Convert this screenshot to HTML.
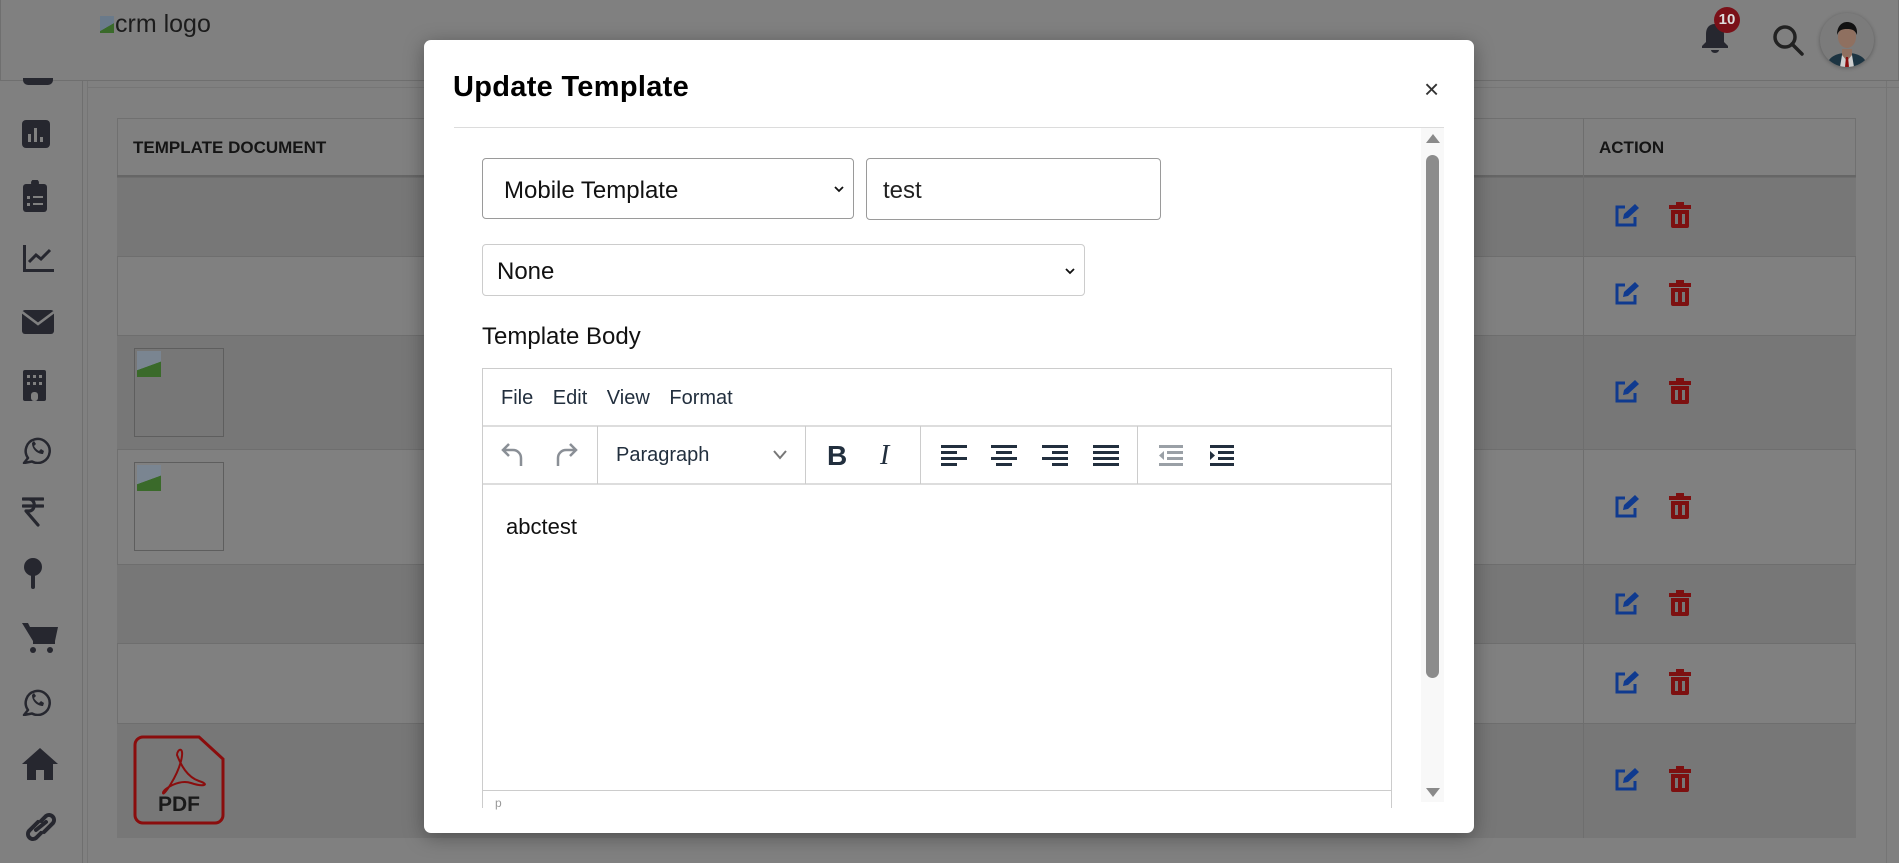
<!DOCTYPE html>
<html><head><meta charset="utf-8"><style>
*{margin:0;padding:0;box-sizing:border-box}
body{width:1899px;height:863px;overflow:hidden;background:#808080;font-family:"Liberation Sans",sans-serif;position:relative}
.a{position:absolute}
.ic{position:absolute}
.row{position:absolute;left:117px;width:1739px;border-top:1px solid #6e6e6e}
.mod{position:absolute;left:424px;top:40px;width:1050px;height:793px;background:#fff;border-radius:7px;box-shadow:0 4px 20px rgba(0,0,0,.35)}
.tb svg{position:absolute}
.sep{position:absolute;top:426px;width:1px;height:58px;background:#ccc}
</style></head><body>
<!-- header -->
<div class="a" style="left:0;top:0;width:1899px;height:81px;border-bottom:1px solid #6f6f6f;border-left:1px solid #6f6f6f;border-right:1px solid #6f6f6f"></div>
<div class="a" style="left:100px;top:10px;font-size:25px;color:#1c1c1c"><span style="display:inline-block;width:14px;height:17px;background:linear-gradient(150deg,#6a7a8a 60%,#3a6a2a 61%);vertical-align:-1px;margin-right:1px"></span>crm logo</div>
<svg class="a" style="left:1700px;top:22px" width="30" height="32" viewBox="0 0 30 32"><path fill="#26272f" d="M15 2c-6 0-9 4-9 10v8l-4 4v2h26v-2l-4-4v-8c0-6-3-10-9-10z"/><path fill="#26272f" d="M11 28h8a4 3 0 0 1-8 0z"/></svg>
<div class="a" style="left:1714px;top:7px;width:26px;height:26px;border-radius:50%;background:#7a1018;color:#ddd;font-size:15px;font-weight:bold;text-align:center;line-height:26px">10</div>
<svg class="a" style="left:1771px;top:23px" width="34" height="34" viewBox="0 0 34 34"><circle cx="14" cy="14" r="10" fill="none" stroke="#222" stroke-width="3.5"/><path d="M21 21l10 10" stroke="#222" stroke-width="3.5" stroke-linecap="round"/></svg>
<div class="a" style="left:1820px;top:13px;width:54px;height:54px;border-radius:50%;background:#7b7b7b;overflow:hidden;box-shadow:0 1px 4px rgba(0,0,0,.3)">
<svg width="54" height="54" viewBox="0 0 54 54"><path d="M6 54c2-10 10-14 21-14s19 4 21 14z" fill="#1c3442"/><path d="M22 36h10v8l-5 3-5-3z" fill="#8f7060"/><path d="M22 42l5 6 5-6 2 12H20z" fill="#cfcfcf"/><path d="M26 44h2l1 10h-4z" fill="#8a0d0d"/><ellipse cx="27" cy="24" rx="9" ry="11" fill="#8f7060"/><path d="M17 22c0-9 5-13 10-13s11 3 10 13c-2-5-5-6-10-6s-8 1-10 6z" fill="#111"/></svg></div>
<!-- sidebar -->
<div class="a" style="left:82px;top:81px;width:1px;height:782px;background:#6f6f6f"></div>
<div class="a" style="left:87px;top:81px;width:1px;height:782px;background:#757575"></div>
<div class="a" style="left:23px;top:78px;width:30px;height:7px;background:#26272f;border-radius:0 0 5px 5px"></div>
<svg class="ic" style="left:22px;top:120px" width="28" height="28" viewBox="0 0 28 28"><rect width="28" height="28" rx="4" fill="#26272f"/><rect x="6" y="14" width="3" height="8" fill="#808080"/><rect x="12" y="8" width="3" height="14" fill="#808080"/><rect x="18" y="17" width="3" height="5" fill="#808080"/></svg>
<svg class="ic" style="left:23px;top:180px" width="24" height="32" viewBox="0 0 24 32"><rect y="4" width="24" height="28" rx="3" fill="#26272f"/><circle cx="12" cy="3" r="4" fill="#26272f"/><g fill="#808080"><rect x="4" y="16" width="3" height="3"/><rect x="10" y="16" width="10" height="2"/><rect x="4" y="23" width="3" height="3"/><rect x="10" y="23" width="10" height="2"/></g></svg>
<svg class="ic" style="left:22px;top:245px" width="32" height="28" viewBox="0 0 32 28"><path d="M1 0h3v24h28v3H1z" fill="#26272f"/><path d="M7 17l7-7 5 4 9-9" fill="none" stroke="#26272f" stroke-width="3"/></svg>
<svg class="ic" style="left:22px;top:310px" width="32" height="24" viewBox="0 0 32 24"><rect width="32" height="24" rx="3" fill="#26272f"/><path d="M0 2l16 12L32 2" fill="none" stroke="#808080" stroke-width="2.5"/></svg>
<svg class="ic" style="left:23px;top:370px" width="23" height="31" viewBox="0 0 23 31"><rect width="23" height="31" rx="2" fill="#26272f"/><g fill="#808080"><rect x="4" y="5" width="3" height="3"/><rect x="10" y="5" width="3" height="3"/><rect x="16" y="5" width="3" height="3"/><rect x="4" y="12" width="3" height="3"/><rect x="10" y="12" width="3" height="3"/><rect x="16" y="12" width="3" height="3"/><rect x="8" y="22" width="7" height="9" rx="3"/></g></svg>
<svg class="ic" style="left:22px;top:434px" width="30" height="30" viewBox="0 0 30 30"><path d="M6 24A12 12 0 1 1 10 27.5L2 29z" fill="none" stroke="#26272f" stroke-width="2.5" stroke-linejoin="round"/><path d="M10 9c0 6 5 11 11 11l1-3-3-2-2 2c-2-1-4-3-5-5l2-2-2-3z" fill="#26272f"/></svg>
<svg class="ic" style="left:22px;top:497px" width="22" height="30" viewBox="0 0 22 30"><path d="M1 2h20M1 9h20M3 2h4c7 0 7 12 0 12H4l12 14" fill="none" stroke="#26272f" stroke-width="3.2" stroke-linecap="round" stroke-linejoin="round"/></svg>
<svg class="ic" style="left:23px;top:558px" width="20" height="32" viewBox="0 0 20 32"><circle cx="10" cy="9" r="9" fill="#26272f"/><rect x="8" y="16" width="4" height="15" rx="2" fill="#26272f"/></svg>
<svg class="ic" style="left:22px;top:622px" width="36" height="32" viewBox="0 0 36 32"><g fill="#26272f"><path d="M0 1h6l2 4h28l-3 14H11z"/><circle cx="11" cy="28" r="3"/><circle cx="28" cy="28" r="3"/><path d="M11 19h22v3H11z"/></g></svg>
<svg class="ic" style="left:22px;top:686px" width="30" height="30" viewBox="0 0 30 30"><path d="M6 24A12 12 0 1 1 10 27.5L2 29z" fill="none" stroke="#26272f" stroke-width="2.5" stroke-linejoin="round"/><path d="M10 9c0 6 5 11 11 11l1-3-3-2-2 2c-2-1-4-3-5-5l2-2-2-3z" fill="#26272f"/></svg>
<svg class="ic" style="left:22px;top:748px" width="36" height="32" viewBox="0 0 36 32"><path d="M18 0L0 16h5v16h9V22h8v10h9V16h5z" fill="#26272f"/></svg>
<svg class="ic" style="left:22px;top:812px" width="38" height="30" viewBox="0 0 38 30"><path d="M16 10l-9 9a5 5 0 0 0 7 7l5-5M22 20l9-9a5 5 0 0 0-7-7l-5 5M14 18l10-8" fill="none" stroke="#26272f" stroke-width="4" stroke-linecap="round"/></svg>
<!-- content -->
<div class="a" style="left:88px;top:87px;width:1811px;height:1px;background:#767676"></div>
<div class="a" style="left:1886px;top:81px;width:1px;height:782px;background:#757575"></div>
<div class="a" style="left:117px;top:118px;width:1739px;height:720px;border:1px solid #707070"></div>
<div class="a" style="left:117px;top:175px;width:1739px;height:2px;background:#666"></div>
<div class="a" style="left:133px;top:138px;font-size:17px;font-weight:bold;color:#151515">TEMPLATE DOCUMENT</div>
<div class="a" style="left:1599px;top:138px;font-size:17px;font-weight:bold;color:#151515">ACTION</div>
<div class="row" style="top:177px;height:79px;background:#777"></div>
<div class="row" style="top:256px;height:79px"></div>
<div class="row" style="top:335px;height:114px;background:#777"></div>
<div class="row" style="top:449px;height:115px"></div>
<div class="row" style="top:564px;height:79px;background:#777"></div>
<div class="row" style="top:643px;height:80px"></div>
<div class="row" style="top:723px;height:115px;background:#777"></div>
<div class="a" style="left:1583px;top:118px;width:1px;height:720px;background:#6e6e6e"></div>
<div class="a" style="left:134px;top:348px;width:90px;height:89px;border:1px solid #5e5e5e"><div style="margin:2px;width:24px;height:26px;background:linear-gradient(160deg,#7a8591 55%,#3a6a2a 56%)"></div></div>
<div class="a" style="left:134px;top:462px;width:90px;height:89px;border:1px solid #5e5e5e"><div style="margin:2px;width:24px;height:26px;background:linear-gradient(160deg,#7a8591 55%,#3a6a2a 56%)"></div></div>
<svg class="a" style="left:133px;top:735px" width="92" height="91" viewBox="0 0 92 91"><path d="M10 2h56l24 22v56a8 8 0 0 1-8 8H10a8 8 0 0 1-8-8V10a8 8 0 0 1 8-8z" fill="none" stroke="#8a0d0d" stroke-width="3"/><path d="M44 20c4 10 10 22 22 26s4 6-8 2-28 6-28 10 14-16 18-32-4-12-4-6z" fill="none" stroke="#8a0d0d" stroke-width="2"/><text x="46" y="76" font-family="Liberation Sans" font-weight="bold" font-size="21" text-anchor="middle" fill="#1a1a1a">PDF</text></svg>
<div id="acts"></div>
<script>
var ys=[216,294,392,507,604,683,780],h='';
ys.forEach(function(y){h+='<svg class="a" style="left:1613px;top:'+(y-13)+'px" width="26" height="26" viewBox="0 0 26 26"><path d="M12 4H4v18h18v-8" fill="none" stroke="#0f3a8f" stroke-width="3"/><path d="M10 16l1-5 11-10 4 4-11 10z" fill="#0f3a8f"/></svg><svg class="a" style="left:1669px;top:'+(y-14)+'px" width="22" height="26" viewBox="0 0 22 26"><path d="M7 0h8v3h7v4H0V3h7z" fill="#7d1010"/><path d="M2 8h18v16a2 2 0 0 1-2 2H4a2 2 0 0 1-2-2z" fill="#7d1010"/><rect x="6" y="12" width="3" height="10" fill="#777"/><rect x="13" y="12" width="3" height="10" fill="#777"/></svg>'});
document.getElementById('acts').innerHTML=h;
</script>
<!-- modal -->
<div class="mod"></div>
<div class="a" style="left:453px;top:71px;font-size:29px;font-weight:bold;color:#000;letter-spacing:0.3px">Update Template</div>
<div class="a" style="left:1424px;top:74px;font-size:26px;color:#333">×</div>
<div class="a" style="left:454px;top:127px;width:990px;height:1px;background:#dcdcdc"></div>
<div class="a" style="left:1421px;top:128px;width:23px;height:674px;background:#f8f8f8"></div>
<div class="a" style="left:1426px;top:134px;width:0;height:0;border-left:7px solid transparent;border-right:7px solid transparent;border-bottom:9px solid #8a8a8a"></div>
<div class="a" style="left:1426px;top:155px;width:13px;height:523px;background:#8c8c8c;border-radius:7px"></div>
<div class="a" style="left:1426px;top:788px;width:0;height:0;border-left:7px solid transparent;border-right:7px solid transparent;border-top:9px solid #8a8a8a"></div>
<div class="a" style="left:482px;top:158px;width:372px;height:61px;border:1px solid #9a9a9a;border-radius:4px;font-size:24px;padding:18px 0 0 21px;color:#111">Mobile Template<svg style="position:absolute;right:9px;top:26px" width="10" height="8" viewBox="0 0 10 8"><path d="M1 2l4 4 4-4" fill="none" stroke="#111" stroke-width="1.8"/></svg></div>
<div class="a" style="left:866px;top:158px;width:295px;height:62px;border:1px solid #9a9a9a;border-radius:4px;font-size:24px;padding:18px 0 0 16px;color:#222">test</div>
<div class="a" style="left:482px;top:244px;width:603px;height:52px;border:1px solid #ccc;border-radius:4px;font-size:24px;padding:13px 0 0 14px;color:#111">None<svg style="position:absolute;right:9px;top:22px" width="10" height="8" viewBox="0 0 10 8"><path d="M1 2l4 4 4-4" fill="none" stroke="#111" stroke-width="1.8"/></svg></div>
<div class="a" style="left:482px;top:323px;font-size:24px;color:#111">Template Body</div>
<div class="a" style="left:482px;top:368px;width:910px;height:440px;border:1px solid #ccc;border-bottom:none"></div>
<div class="a" style="left:483px;top:425px;width:908px;height:2px;background:#ddd"></div>
<div class="a" style="left:483px;top:483px;width:908px;height:2px;background:#ddd"></div>
<div class="a" style="left:483px;top:790px;width:908px;height:1px;background:#ccc"></div>
<div class="a" style="left:495px;top:796px;font-size:12px;color:#999">p</div>
<div class="a" style="left:501px;top:387px;font-size:20px;color:#222f3e;word-spacing:14px">File Edit View Format</div>
<div class="sep" style="left:597px"></div><div class="sep" style="left:805px"></div><div class="sep" style="left:920px"></div><div class="sep" style="left:1137px"></div>
<div class="tb">
<svg style="left:500px;top:441px" width="26" height="28" viewBox="0 0 26 28"><path d="M9 3L3 9l6 6M3 9h10a8 8 0 0 1 8 8v8" fill="none" stroke="#8a8f96" stroke-width="2.5"/></svg>
<svg style="left:553px;top:441px" width="26" height="28" viewBox="0 0 26 28"><path d="M17 3l6 6-6 6M23 9H13a8 8 0 0 0-8 8v8" fill="none" stroke="#8a8f96" stroke-width="2.5"/></svg>
<div style="position:absolute;left:616px;top:444px;font-size:20px;color:#222f3e">Paragraph</div>
<svg style="left:772px;top:449px" width="16" height="12" viewBox="0 0 16 12"><path d="M2 2l6 7 6-7" fill="none" stroke="#777" stroke-width="2"/></svg>
<div style="position:absolute;left:827px;top:440px;font-size:28px;font-weight:bold;color:#222f3e">B</div>
<div style="position:absolute;left:880px;top:440px;font-size:28px;font-style:italic;font-family:'Liberation Serif',serif;color:#222f3e">I</div>
<svg style="left:941px;top:443px" width="26" height="24" viewBox="0 0 26 24"><g fill="#222f3e"><rect y="2" width="26" height="3"/><rect y="8" width="16" height="3"/><rect y="14" width="26" height="3"/><rect y="20" width="16" height="3"/></g></svg>
<svg style="left:991px;top:443px" width="26" height="24" viewBox="0 0 26 24"><g fill="#222f3e"><rect y="2" width="26" height="3"/><rect x="5" y="8" width="16" height="3"/><rect y="14" width="26" height="3"/><rect x="5" y="20" width="16" height="3"/></g></svg>
<svg style="left:1042px;top:443px" width="26" height="24" viewBox="0 0 26 24"><g fill="#222f3e"><rect y="2" width="26" height="3"/><rect x="10" y="8" width="16" height="3"/><rect y="14" width="26" height="3"/><rect x="10" y="20" width="16" height="3"/></g></svg>
<svg style="left:1093px;top:443px" width="26" height="24" viewBox="0 0 26 24"><g fill="#222f3e"><rect y="2" width="26" height="3"/><rect y="8" width="26" height="3"/><rect y="14" width="26" height="3"/><rect y="20" width="26" height="3"/></g></svg>
<svg style="left:1157px;top:443px" width="26" height="24" viewBox="0 0 26 24"><g fill="#9aa0a6"><rect x="2" y="2" width="24" height="3"/><rect x="10" y="8" width="16" height="3"/><rect x="10" y="14" width="16" height="3"/><rect x="2" y="20" width="24" height="3"/><path d="M7 8l-5 4.5 5 4.5z"/></g></svg>
<svg style="left:1208px;top:443px" width="26" height="24" viewBox="0 0 26 24"><g fill="#222f3e"><rect x="2" y="2" width="24" height="3"/><rect x="10" y="8" width="16" height="3"/><rect x="10" y="14" width="16" height="3"/><rect x="2" y="20" width="24" height="3"/><path d="M2 8l5 4.5-5 4.5z"/></g></svg>
</div>
<div class="a" style="left:506px;top:514px;font-size:22px;color:#111">abctest</div>
</body></html>
